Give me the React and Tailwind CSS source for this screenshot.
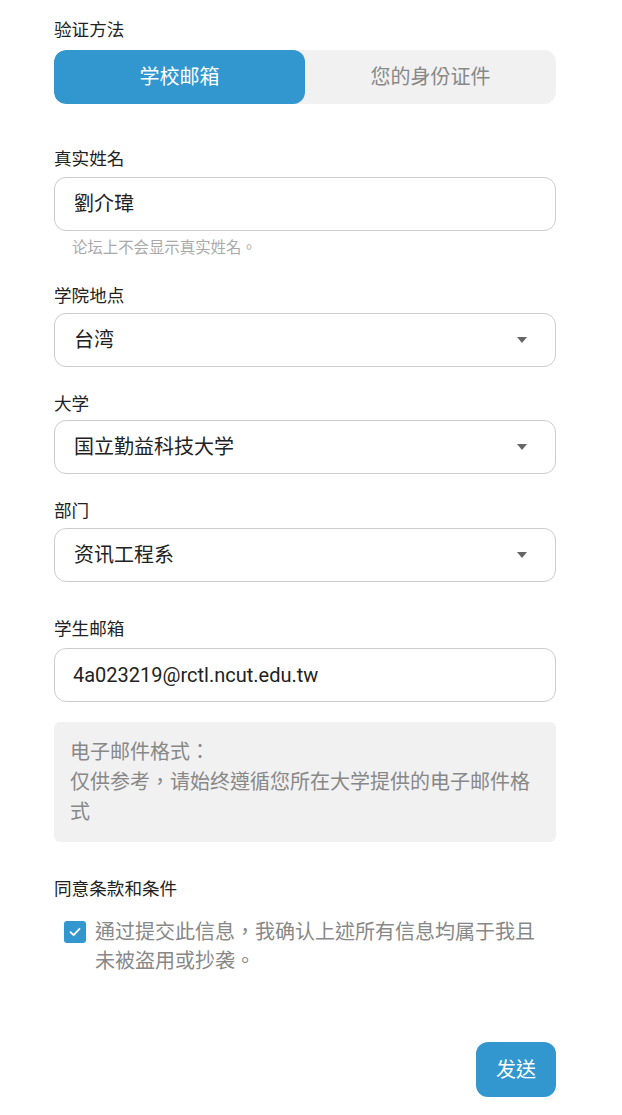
import React from "react";

const font = { fontFamily: 'Roboto, "Noto Sans CJK TC", "Noto Sans CJK SC", sans-serif' };

function Label({ children, className = "" }) {
  return <div className={"text-[17.6px] leading-[24px] text-[#222] " + className}>{children}</div>;
}

function Caret() {
  return (
    <svg width="10" height="6" viewBox="0 0 10 6" className="shrink-0">
      <path d="M0 0 L10 0 L5 6 Z" fill="#666" />
    </svg>
  );
}

function Select({ value }) {
  return (
    <div className="flex h-[54px] items-center justify-between rounded-[12px] border border-[#cccccc] bg-white pl-[19px] pr-[28px]">
      <span className="text-[20px] text-[#222]">{value}</span>
      <Caret />
    </div>
  );
}

export default function App() {
  return (
    <div className="min-h-[1115px] w-[622px] bg-white" style={font}>
      <div className="ml-[54px] w-[502px] pt-[18px]">
        <Label>验证方法</Label>
        <div className="mt-[8px] flex h-[54px] overflow-hidden rounded-[12px] bg-[#f1f1f1]">
          <div className="flex flex-1 items-center justify-center rounded-[12px] bg-[#3397cf] text-[20px] text-white">学校邮箱</div>
          <div className="flex flex-1 items-center justify-center text-[20px] text-[#888]">您的身份证件</div>
        </div>

        <Label className="mt-[43px]">真实姓名</Label>
        <div className="mt-[6px] flex h-[54px] items-center rounded-[12px] border border-[#cccccc] bg-white pl-[19px]">
          <span className="text-[20px] text-[#222]">劉介瑋</span>
        </div>
        <div className="mt-[7px] pl-[18px] text-[15.4px] leading-[20px] text-[#aaaaaa]">论坛上不会显示真实姓名。</div>

        <Label className="mt-[26px]">学院地点</Label>
        <div className="mt-[5px]"><Select value="台湾" /></div>

        <Label className="mt-[25px]">大学</Label>
        <div className="mt-[4px]"><Select value="国立勤益科技大学" /></div>

        <Label className="mt-[25px]">部门</Label>
        <div className="mt-[5px]"><Select value="资讯工程系" /></div>

        <Label className="mt-[35px]">学生邮箱</Label>
        <div className="mt-[7px] flex h-[54px] items-center rounded-[12px] border border-[#cccccc] bg-white pl-[18px]">
          <span className="text-[20px] text-[#222]">4a023219@rctl.ncut.edu.tw</span>
        </div>

        <div className="mt-[20px] rounded-[6px] bg-[#f1f1f1] px-[16px] pb-[15px] pt-[15px] text-[20px] leading-[30px] text-[#888]">
          电子邮件格式：<br />
          仅供参考，请始终遵循您所在大学提供的电子邮件格式
        </div>

        <Label className="mt-[35px]">同意条款和条件</Label>
        <div className="mt-[17px] flex gap-[9px] pl-[10px]">
          <div className="mt-[3px] flex h-[22px] w-[22px] shrink-0 items-center justify-center rounded-[3px] bg-[#3397cf]">
            <svg width="14" height="14" viewBox="0 0 14 14">
              <path d="M2.5 7.2 L5.6 10.2 L11.5 3.8" fill="none" stroke="white" strokeWidth="1.8" strokeLinecap="round" strokeLinejoin="round" />
            </svg>
          </div>
          <div className="w-[450px] text-[20px] leading-[29px] text-[#888]">通过提交此信息，我确认上述所有信息均属于我且未被盗用或抄袭。</div>
        </div>

        <div className="mt-[66px] flex justify-end">
          <button className="flex h-[55px] w-[80px] items-center justify-center rounded-[12px] bg-[#3397cf] text-[20px] text-white">发送</button>
        </div>
      </div>
    </div>
  );
}
